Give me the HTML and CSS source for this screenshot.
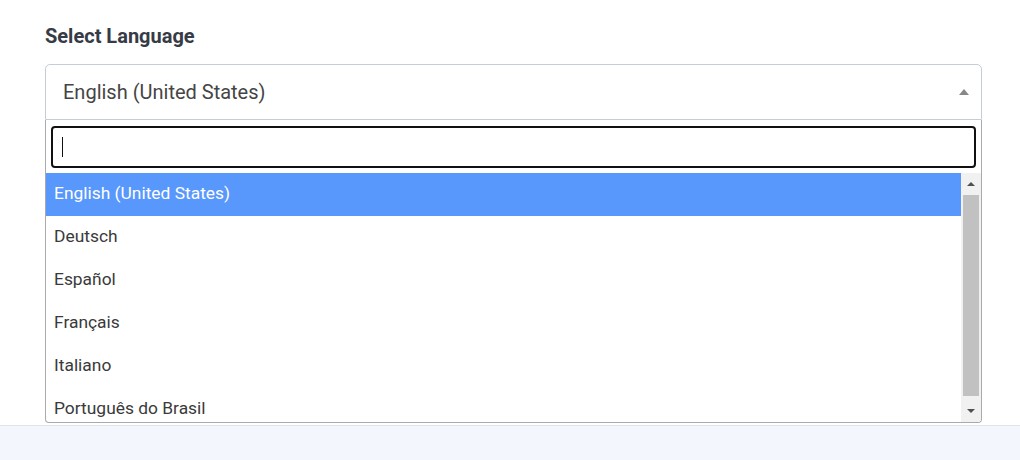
FILE: index.html
```html
<!DOCTYPE html>
<html>
<head>
<meta charset="utf-8">
<link rel="stylesheet" href="styles.css">
</head>
<body>
<div class="panel">
  <div class="label">Select Language</div>
  <div class="select">
    <span class="select-value">English (United States)</span>
    <span class="select-arrow"></span>
  </div>
  <div class="dropdown">
    <div class="search-wrap">
      <div class="search"><span class="caret"></span></div>
    </div>
    <div class="results">
      <ul class="options">
        <li class="option active">English (United States)</li>
        <li class="option">Deutsch</li>
        <li class="option">Español</li>
        <li class="option">Français</li>
        <li class="option">Italiano</li>
        <li class="option">Português do Brasil</li>
      </ul>
      <div class="scrollbar">
        <div class="sb-btn"><span class="tri-up"></span></div>
        <div class="sb-track"><div class="sb-thumb"></div></div>
        <div class="sb-btn"><span class="tri-down"></span></div>
      </div>
    </div>
  </div>
</div>
<div class="footer"></div>
</body>
</html>
```

FILE: styles.css
```css
html, body {
  margin: 0;
  padding: 0;
  background: #ffffff;
  font-family: Roboto, "Liberation Sans", Arial, sans-serif;
}
.panel {
  padding: 24px 38px 0 45px;
  height: 403px;
  box-sizing: border-box;
  background: #fff;
}
.label {
  font-size: 20px;
  font-weight: 700;
  color: #363b45;
  line-height: 24px;
  height: 40px;
}
.select {
  height: 56px;
  box-sizing: border-box;
  border: 1px solid #c5ced6;
  border-radius: 5px 5px 0 0;
  display: flex;
  align-items: center;
  padding: 0 12px 0 17px;
}
.select-value {
  flex: 1;
  font-size: 20px;
  color: #454545;
}
.select-arrow {
  width: 0;
  height: 0;
  border-left: 5px solid transparent;
  border-right: 5px solid transparent;
  border-bottom: 6px solid #888;
}
.dropdown {
  height: 303px;
  box-sizing: border-box;
  border: 1px solid #aaa;
  border-top: none;
  border-radius: 0 0 4px 4px;
  display: flex;
  flex-direction: column;
  overflow: hidden;
}
.search-wrap {
  padding: 6px 5px 5px 5px;
}
.search {
  height: 42px;
  box-sizing: border-box;
  border: 2px solid #111;
  border-radius: 4px;
  display: flex;
  align-items: center;
  padding-left: 9px;
}
.caret {
  width: 1px;
  height: 20px;
  background: #111;
}
.results {
  flex: 1;
  display: flex;
  min-height: 0;
}
.options {
  flex: 1;
  list-style: none;
  margin: 0;
  padding: 0;
  overflow: hidden;
}
.option {
  height: 43px;
  line-height: 40px;
  padding-left: 8px;
  font-size: 17.4px;
  color: #3a3a3a;
}
.option.active {
  background: #5897fb;
  color: #fff;
}
.scrollbar {
  width: 20px;
  background: #f1f1f1;
  display: flex;
  flex-direction: column;
}
.sb-btn {
  height: 22px;
  display: flex;
  align-items: center;
  justify-content: center;
}
.tri-up {
  width: 0;
  height: 0;
  border-left: 4px solid transparent;
  border-right: 4px solid transparent;
  border-bottom: 4px solid #505050;
}
.tri-down {
  width: 0;
  height: 0;
  border-left: 4px solid transparent;
  border-right: 4px solid transparent;
  border-top: 4px solid #505050;
}
.sb-track {
  flex: 1;
  display: flex;
  flex-direction: column;
  padding: 0 2px 0 2px;
}
.sb-thumb {
  flex: 1;
  background: #c1c1c1;
  margin-bottom: 4px;
}
.footer {
  height: 34px;
  border-top: 1px solid #dde4ee;
  margin-top: 22px;
  background: #f3f6fd;
}
```
